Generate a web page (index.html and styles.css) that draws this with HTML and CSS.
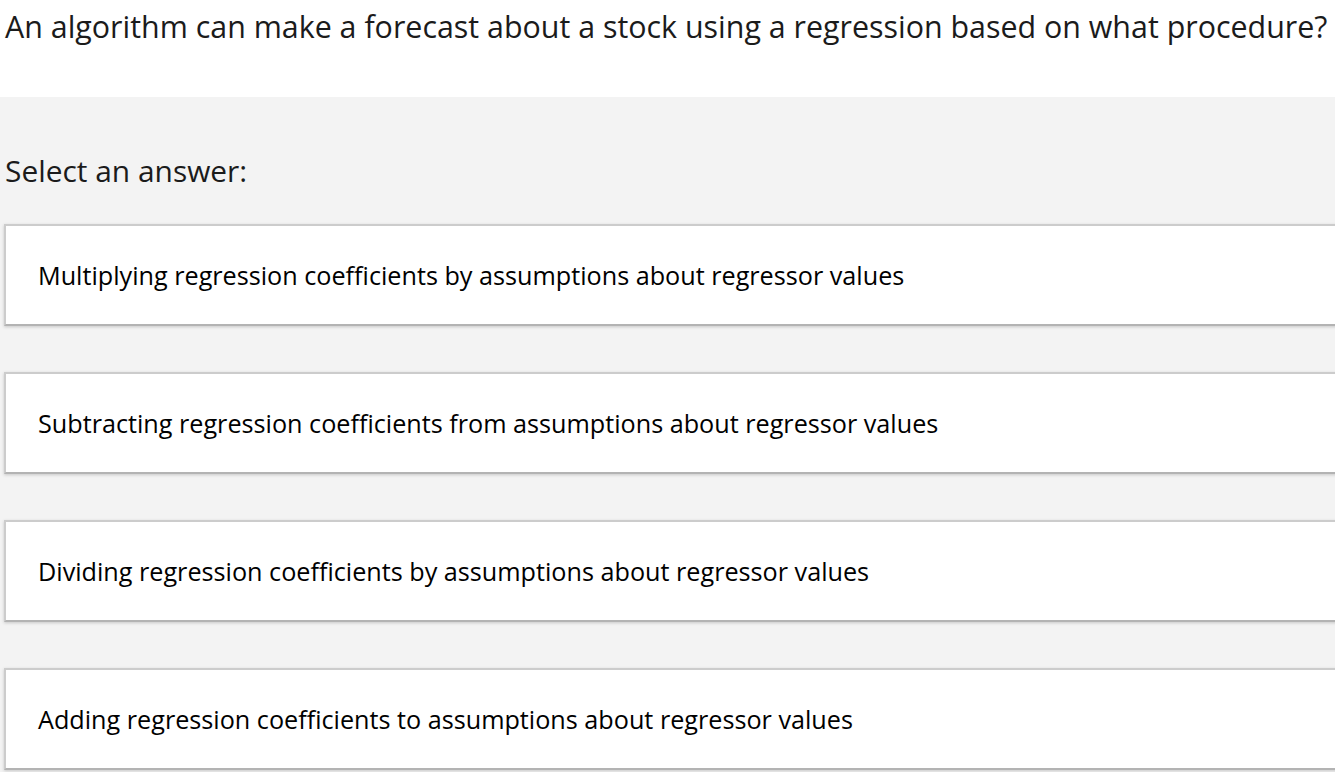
FILE: index.html
```html
<!DOCTYPE html>
<html lang="en">
<head>
<meta charset="utf-8">
<title>Question</title>
<link rel="stylesheet" href="styles.css">
</head>
<body>
<div class="page">
  <header class="question">
    <p class="question-text">An algorithm can make a forecast about a stock using a regression based on what procedure?</p>
  </header>
  <section class="answers">
    <p class="prompt">Select an answer:</p>
    <ul class="options">
      <li class="option">Multiplying regression coefficients by assumptions about regressor values</li>
      <li class="option">Subtracting regression coefficients from assumptions about regressor values</li>
      <li class="option">Dividing regression coefficients by assumptions about regressor values</li>
      <li class="option">Adding regression coefficients to assumptions about regressor values</li>
    </ul>
  </section>
</div>
</body>
</html>
```
FILE: styles.css
```css
html, body {
  margin: 0;
  padding: 0;
  overflow: hidden;
  background: #f3f3f3;
}
body {
  font-family: "Open Sans", "Noto Sans", sans-serif;
  color: #1b1b1b;
}
.page {
  width: 1335px;
  height: 772px;
  overflow: hidden;
}
.question {
  background: #ffffff;
  height: 97px;
  box-sizing: border-box;
  padding: 6px 5px 0;
}
.question-text {
  margin: 0;
  font-size: 30.4px;
  line-height: 42px;
  white-space: nowrap;
}
.answers {
  background: #f3f3f3;
  padding: 54px 0 0 0;
}
.prompt {
  margin: 0 0 0 5px;
  font-size: 29.9px;
  line-height: 40px;
}
.options {
  list-style: none;
  margin: 33px -20px 0 4px;
  padding: 0;
  display: flex;
  flex-direction: column;
  gap: 46px;
}
.option {
  background: #ffffff;
  height: 102px;
  box-sizing: border-box;
  border: 2px solid #cccccc;
  border-bottom-color: #b3b3b3;
  box-shadow: 0 1px 3px rgba(0, 0, 0, 0.18);
  display: flex;
  align-items: center;
  padding: 0 0 0 32px;
  font-size: 25.2px;
  color: #000000;
  white-space: nowrap;
}
```
